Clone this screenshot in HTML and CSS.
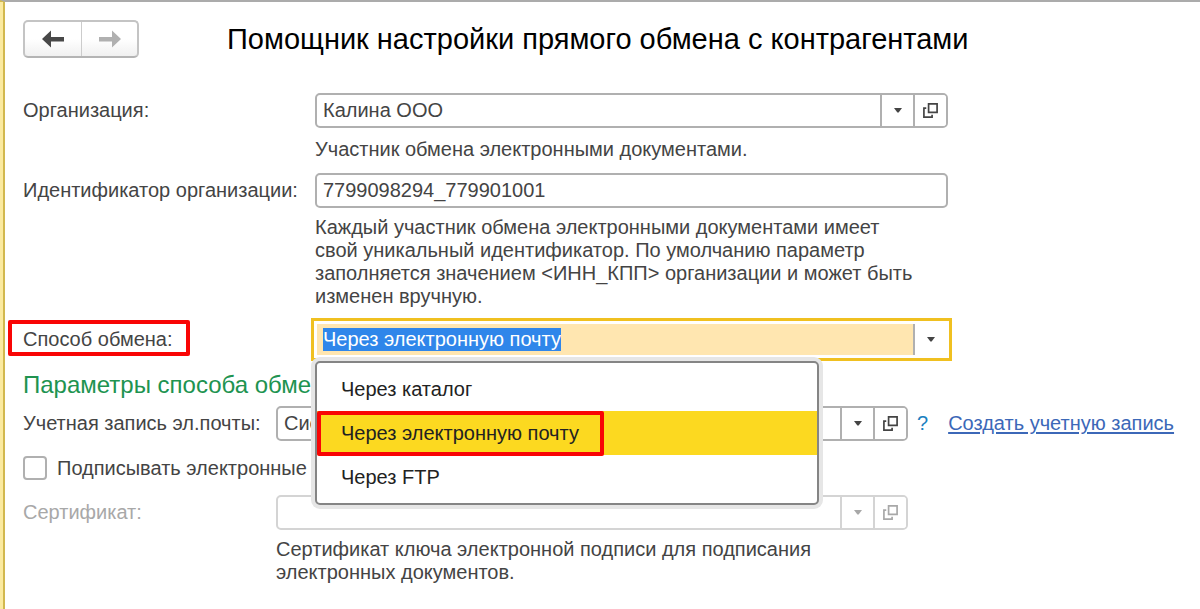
FILE: index.html
```html
<!DOCTYPE html>
<html lang="ru">
<head>
<meta charset="utf-8">
<title>Помощник настройки прямого обмена с контрагентами</title>
<link rel="stylesheet" href="styles.css">
</head>
<body>
<svg class="sprite" aria-hidden="true">
  <symbol id="caret" viewBox="0 0 8 5"><path d="M0 0h8L4.600 4.500h-1.200z" fill="currentColor"/></symbol>
  <symbol id="open" viewBox="0 0 16 16"><path d="M6.200 1.800h8v8h-8zM4 5.700H1.800v8.500h7.700V12" fill="none" stroke="currentColor" stroke-width="1.600"/></symbol>
</svg>
<main class="page">
  <header class="header">
    <nav class="history" aria-label="История">
      <button class="history-button" type="button" aria-label="Назад"><svg width="22" height="18" viewBox="0 0 22 18"><path d="M0 9L9 0.500V7h13v4.500H9v6z" fill="currentColor"/></svg></button>
      <button class="history-button" type="button" aria-label="Вперед" disabled><svg width="22" height="18" viewBox="0 0 22 18"><path d="M22 9L13 0.500V7H0v4.500h13v6z" fill="currentColor"/></svg></button>
    </nav>
    <h1 class="title">Помощник настройки прямого обмена с контрагентами</h1>
  </header>
  <form class="form">
    <section class="group">
      <label class="label" for="org">Организация:</label>
      <div class="field">
        <input class="input" id="org" type="text" value="Калина ООО">
        <button class="field-button" type="button" aria-label="Выбрать организацию"><svg class="caret"><use href="#caret"/></svg></button>
        <button class="field-button" type="button" aria-label="Открыть организацию"><svg class="open"><use href="#open"/></svg></button>
      </div>
      <p class="hint">Участник обмена электронными документами.</p>
      <label class="label" for="ident">Идентификатор организации:</label>
      <div class="field"><input class="input" id="ident" type="text" value="7799098294_779901001"></div>
      <p class="hint hint-long">Каждый участник обмена электронными документами имеет<br>свой уникальный идентификатор. По умолчанию параметр<br>заполняется значением &lt;ИНН_КПП&gt; организации и может быть<br>изменен вручную.</p>
      <label class="label" for="method"><span class="marked">Способ обмена:</span></label>
      <div class="combo">
        <div class="field field-active">
          <input class="input" id="method" type="text" value="Через электронную почту" role="combobox" aria-expanded="true" aria-controls="methods" autofocus>
          <button class="field-button" type="button" aria-label="Показать способы"><svg class="caret"><use href="#caret"/></svg></button>
        </div>
        <div class="menu" id="methods" role="listbox">
          <button class="option" type="button" role="option">Через каталог</button>
          <button class="option option-current" type="button" role="option" aria-selected="true"><span class="marked">Через электронную почту</span></button>
          <button class="option" type="button" role="option">Через FTP</button>
        </div>
      </div>
    </section>
    <h2 class="subtitle">Параметры способа обмена</h2>
    <section class="group group-params">
      <label class="label" for="account">Учетная запись эл.почты:</label>
      <div class="line">
        <div class="field">
          <input class="input" id="account" type="text" value="Системная">
          <button class="field-button" type="button" aria-label="Выбрать учетную запись"><svg class="caret"><use href="#caret"/></svg></button>
          <button class="field-button" type="button" aria-label="Открыть учетную запись"><svg class="open"><use href="#open"/></svg></button>
        </div>
        <button class="help" type="button">?</button>
        <a class="link" href="#">Создать учетную запись</a>
      </div>
      <label class="check"><input class="checkbox" type="checkbox">Подписывать электронные</label>
      <label class="label label-disabled" for="cert">Сертификат:</label>
      <div class="line">
        <div class="field field-disabled">
          <input class="input" id="cert" type="text" disabled>
          <button class="field-button" type="button" aria-label="Выбрать сертификат" disabled><svg class="caret"><use href="#caret"/></svg></button>
          <button class="field-button" type="button" aria-label="Открыть сертификат" disabled><svg class="open"><use href="#open"/></svg></button>
        </div>
      </div>
      <p class="hint hint-long">Сертификат ключа электронной подписи для подписания<br>электронных документов.</p>
    </section>
  </form>
</main>
<script src="script.js"></script>
</body>
</html>
```
FILE: styles.css
```css
* { box-sizing: border-box; }

body {
  margin: 0;
  background: #fff;
  color: #444;
  font: 20px/23px "Liberation Sans", Arial, sans-serif;
}

button, input { font: inherit; color: inherit; }

.sprite { display: none; }

.page {
  position: relative;
  min-height: 100vh;
  padding: 18px 20px 20px 18px;
  border-top: 2px solid #ababab;
  border-left: 5px solid #d2b84e;
}

.page::before {
  content: "";
  position: absolute;
  top: 0;
  bottom: 0;
  left: -5px;
  width: 3px;
  background: #fbeaa0;
}

.header { display: flex; align-items: center; gap: 88px; }

.history {
  display: flex;
  flex: none;
  height: 38px;
  border: 2px solid #c4c4c4;
  border-bottom-color: #b4b4b4;
  border-radius: 5px;
  background: linear-gradient(#fff 50%, #f0f0f0);
}

.history-button {
  display: flex;
  align-items: center;
  justify-content: center;
  width: 56px;
  padding: 0;
  border: 0;
  background: none;
  color: #484848;
}

.history-button + .history-button { border-left: 1px solid #ccc; }
.history-button:disabled { color: #b0b0b0; }

.title { margin: 0; color: #000; font-size: 29px; line-height: 34px; font-weight: 400; }

.form { padding-top: 35px; }

.group {
  display: grid;
  grid-template-columns: 292px minmax(0, 633px);
  align-items: center;
}

.group-params { grid-template-columns: 253px minmax(0, 1fr); }

.label { white-space: nowrap; }
.label-disabled { color: #a8a8a8; }

.field {
  display: flex;
  height: 35px;
  width: 100%;
  border: 2px solid #b0b0b0;
  border-radius: 5px;
  background: #fff;
  overflow: hidden;
}

.input {
  flex: 1;
  min-width: 0;
  padding: 0 6px;
  border: 0;
  outline: 0;
  background: transparent;
}

.field-button {
  display: flex;
  flex: none;
  align-items: center;
  justify-content: center;
  width: 33px;
  padding: 0;
  border: 0;
  border-left: 2px solid #b0b0b0;
  background: #fff;
}

.caret { width: 8px; height: 5px; }
.open { width: 17px; height: 17px; }

.hint { grid-column: 2; margin: 10px 0 12px; }
.hint-long { margin: 8px 0 14px; }

.field-active {
  border-color: transparent;
  outline: 3px solid #f0c020;
  outline-offset: 1px;
  border-radius: 0;
}

.field-active .input { background: #ffe6b0; }
.field-active .input::selection { background: #2f86ea; color: #fff; }

.field-disabled { border-color: #d4d4d4; }
.field-disabled .field-button { border-color: #d4d4d4; color: #a8a8a8; }

.combo { position: relative; }

.menu {
  position: absolute;
  z-index: 2;
  top: 39px;
  left: 0;
  width: 504px;
  padding: 4px 0;
  border: 2px solid #858585;
  border-radius: 5px;
  background: #fff;
  box-shadow: 0 0 0 4px #e6e6e6;
}

.option {
  display: block;
  width: 100%;
  height: 44px;
  padding: 0 24px;
  border: 0;
  background: #fff;
  color: #222;
  text-align: left;
}

.option-current { background: #fcd920; }

.marked { position: relative; }

.marked::after {
  content: "";
  position: absolute;
  inset: -8px -17px -6px -15px;
  border: 4px solid #f90505;
  border-radius: 2px;
}

.option .marked::after { inset: -11px -25px -12px -24px; }

.subtitle { margin: 14px 0 7px; color: #209350; font-size: 24px; line-height: 28px; font-weight: 400; }

.line { display: flex; align-items: center; }
.line .field { flex: 0 1 632px; }

.help { margin: 0 20px 0 9px; padding: 0; border: 0; background: none; color: #1a80c0; }
.link { color: #3c68b8; text-underline-offset: 2px; white-space: nowrap; }

.check { grid-column: 1 / -1; display: flex; align-items: center; gap: 10px; margin: 15px 0; }

.checkbox {
  appearance: none;
  width: 24px;
  height: 24px;
  margin: 0;
  border: 2px solid #b0b0b0;
  border-radius: 4px;
  background: #fff;
}
```
FILE: script.js
```js
const method = document.getElementById("method");
method.focus();
method.select();
```
